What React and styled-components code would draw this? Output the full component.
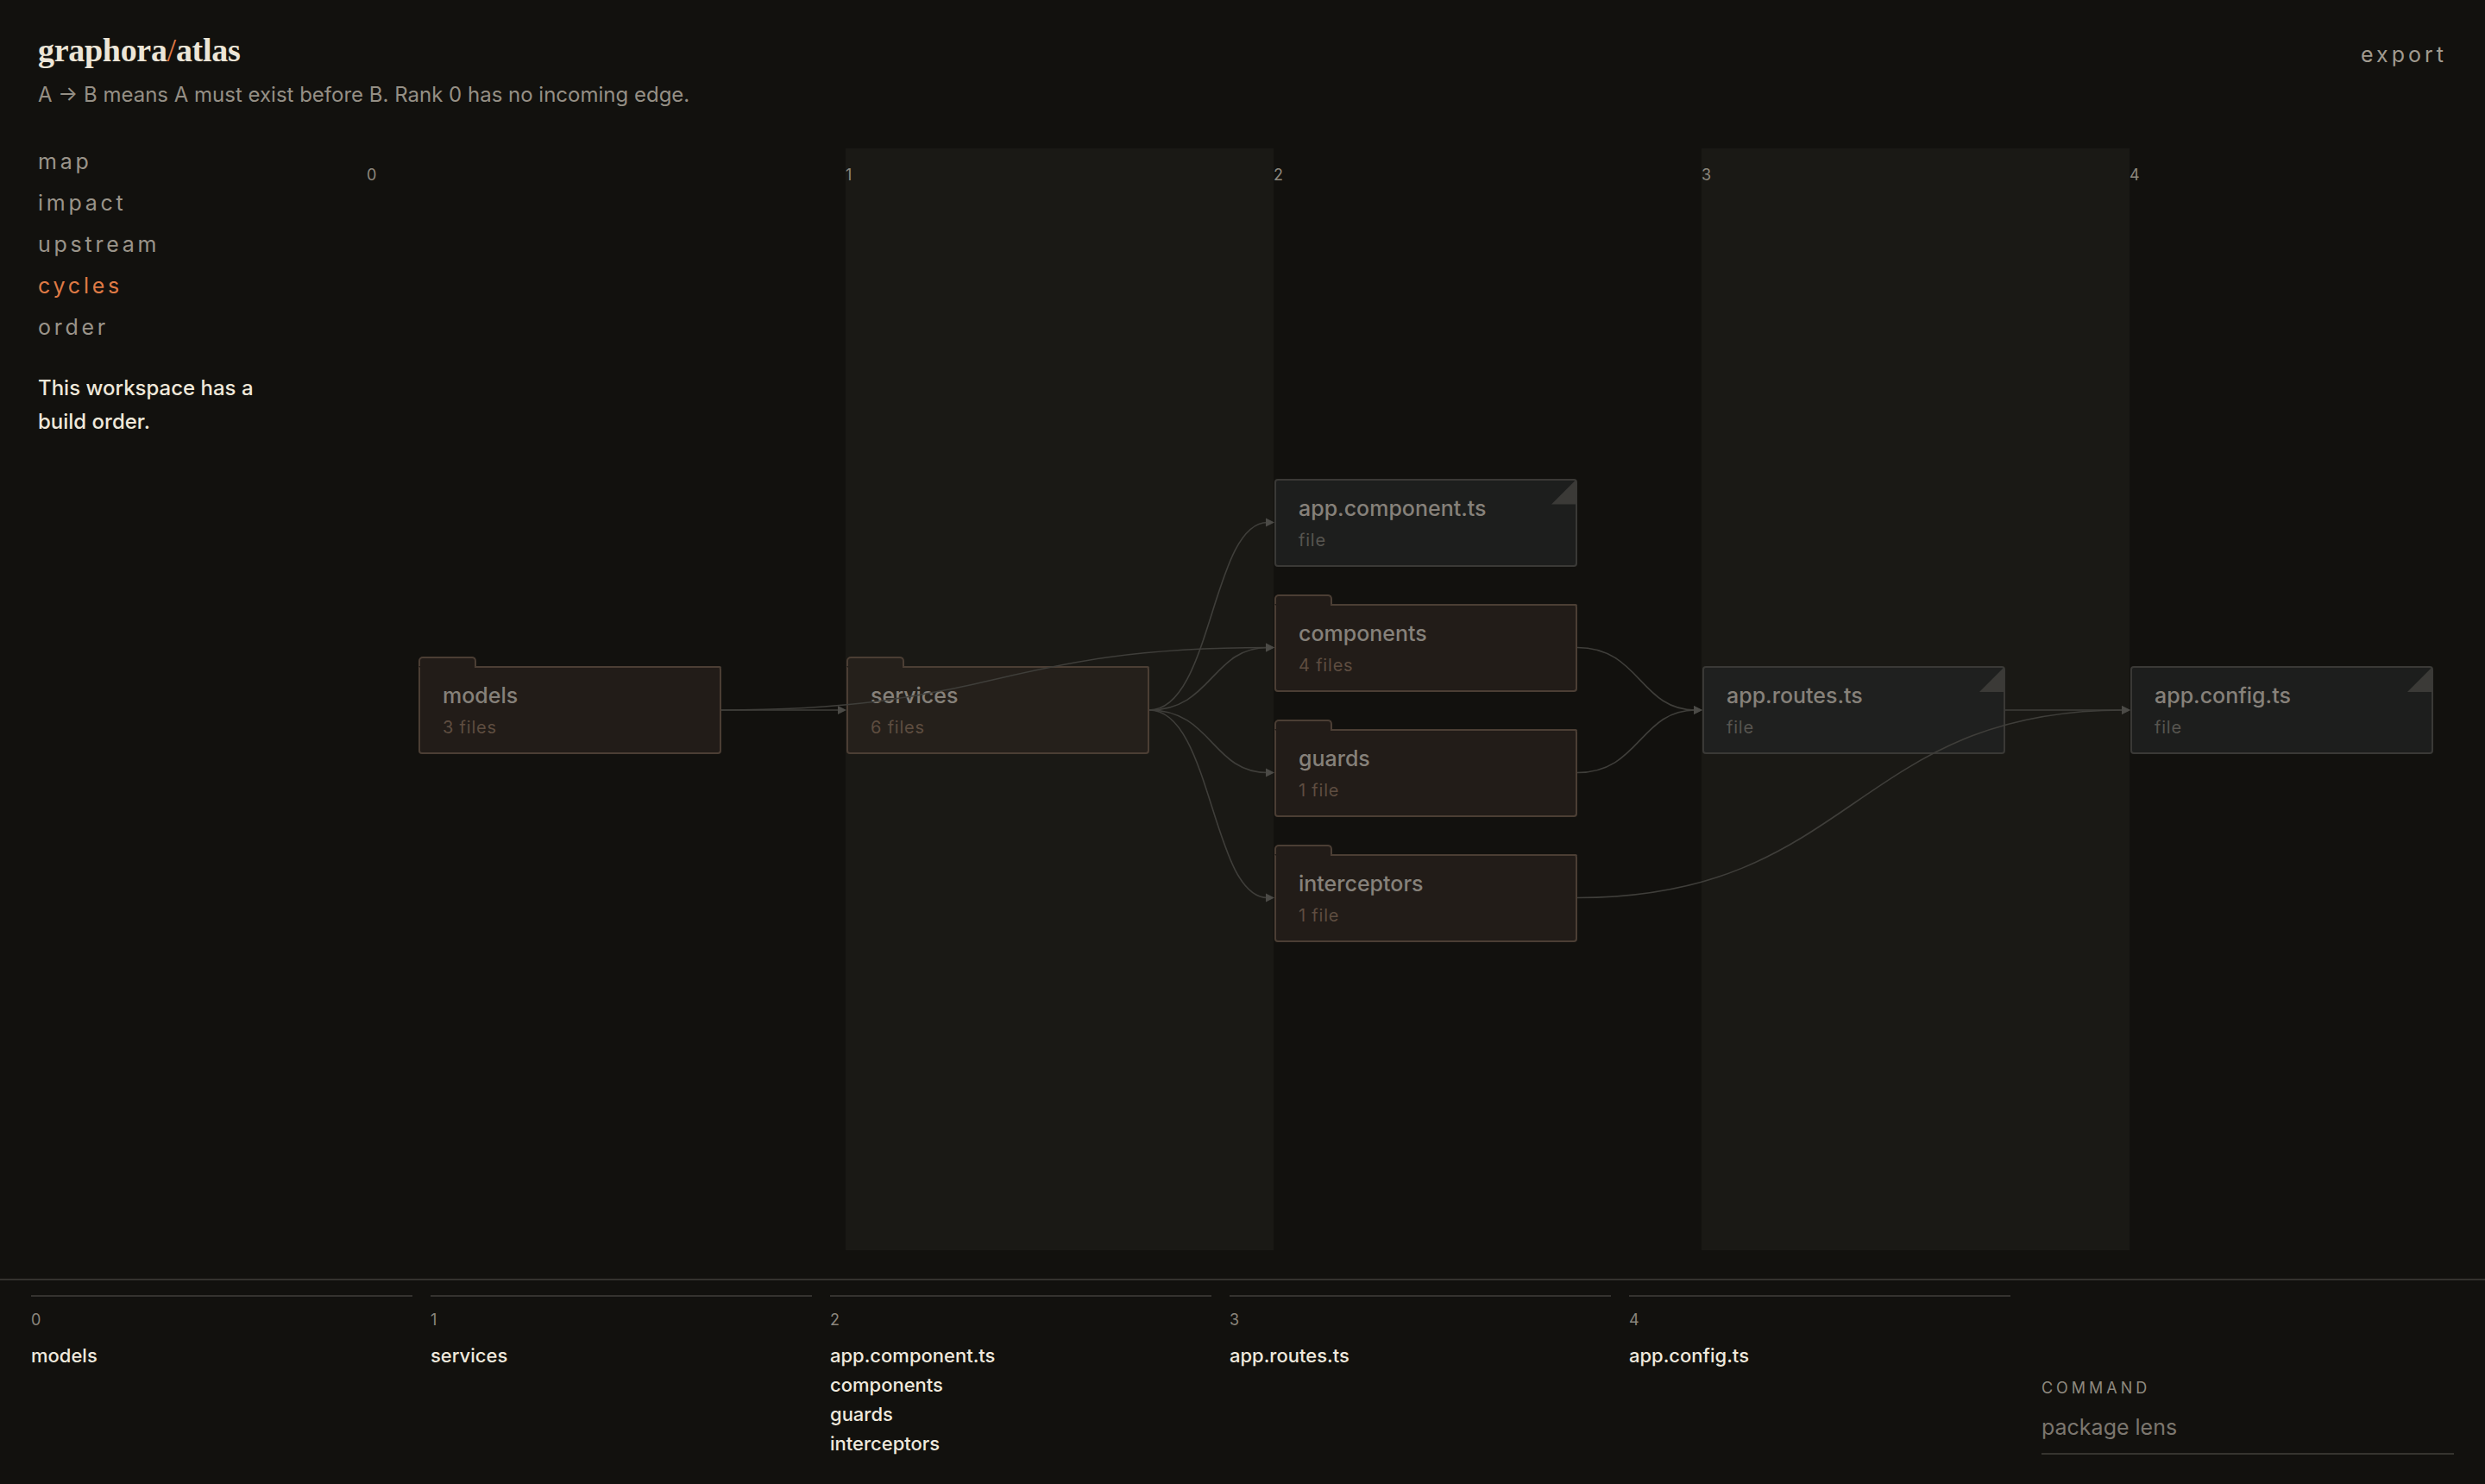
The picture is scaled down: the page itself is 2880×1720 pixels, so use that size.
import React from "react";
import styled, { createGlobalStyle } from "styled-components";

const GlobalStyle = createGlobalStyle`
  html, body {
    margin: 0;
    padding: 0;
    background: #12110e;
    overflow: hidden;
  }
  body {
    font-family: Inter, "Noto Sans", sans-serif;
    color: #efe8da;
  }
`;

const COL_W = 496;
const NODE_W = 351;
const NODE_H = 102;
const ROW_STEP = 145;
const MID_Y = 651;

const ranks = [
  [{ id: "models", name: "models", meta: "3 files", kind: "folder" }],
  [{ id: "services", name: "services", meta: "6 files", kind: "folder" }],
  [
    { id: "appComponent", name: "app.component.ts", meta: "file", kind: "file" },
    { id: "components", name: "components", meta: "4 files", kind: "folder" },
    { id: "guards", name: "guards", meta: "1 file", kind: "folder" },
    { id: "interceptors", name: "interceptors", meta: "1 file", kind: "folder" },
  ],
  [{ id: "routes", name: "app.routes.ts", meta: "file", kind: "file" }],
  [{ id: "config", name: "app.config.ts", meta: "file", kind: "file" }],
];

const edges = [
  ["models", "services"],
  ["models", "components"],
  ["services", "appComponent"],
  ["services", "components"],
  ["services", "guards"],
  ["services", "interceptors"],
  ["components", "routes"],
  ["guards", "routes"],
  ["routes", "config"],
  ["interceptors", "config"],
];

const navItems = ["map", "impact", "upstream", "cycles", "order"];

// node positions inside the canvas
const layout = {};
ranks.forEach((col, r) => {
  col.forEach((n, i) => {
    const cy = MID_Y + (i - (col.length - 1) / 2) * ROW_STEP;
    layout[n.id] = { ...n, rank: r, x: 60 + r * COL_W, y: cy - NODE_H / 2 };
  });
});

const Page = styled.div`
  height: 100vh;
  display: flex;
  flex-direction: column;
  box-sizing: border-box;
`;

const Header = styled.header`
  display: flex;
  justify-content: space-between;
  align-items: flex-start;
  padding: 36px 44px 0 44px;
`;

const Brand = styled.div`
  display: flex;
  flex-direction: column;
  gap: 14px;
`;

const Logo = styled.h1`
  margin: 0;
  font-family: "Liberation Serif", "DejaVu Serif", serif;
  font-weight: 700;
  font-size: 38px;
  line-height: 44px;
  letter-spacing: -0.3px;
  color: #ece5d7;

  span {
    color: #e07a45;
    font-weight: 400;
  }
`;

const Subtitle = styled.p`
  margin: 0;
  font-size: 24px;
  line-height: 31px;
  color: #958f85;
`;

const ExportButton = styled.button`
  margin-top: 12px;
  background: none;
  border: none;
  padding: 0;
  font-family: Inter, sans-serif;
  font-size: 25px;
  line-height: 30px;
  letter-spacing: 0.16em;
  color: #a19b90;
  cursor: pointer;
`;

const Main = styled.main`
  display: flex;
  padding: 35px 44px 0 44px;
  flex: 0 0 auto;
`;

const Sidebar = styled.aside`
  width: 381px;
  flex: 0 0 381px;
  display: flex;
  flex-direction: column;
  padding-top: 3px;
`;

const Nav = styled.nav`
  display: flex;
  flex-direction: column;
`;

const NavItem = styled.a`
  font-size: 25px;
  line-height: 48px;
  letter-spacing: 0.15em;
  color: ${(p) => (p.$active ? "#df7a45" : "#9a948a")};
  cursor: pointer;
`;

const Note = styled.p`
  margin: 27px 0 0;
  width: 270px;
  font-size: 24px;
  font-weight: 500;
  line-height: 39px;
  color: #efe8da;
`;

const Canvas = styled.section`
  position: relative;
  flex: 1;
  margin-top: 12px;
  height: 1277px;
`;

const Columns = styled.div`
  display: grid;
  grid-template-columns: 555px ${COL_W}px ${COL_W}px ${COL_W}px 1fr;
  height: 100%;
`;

const Column = styled.div`
  background: ${(p) => (p.$band ? "#1a1915" : "transparent")};
  padding-top: 20px;
`;

const ColLabel = styled.div`
  font-size: 18px;
  line-height: 22px;
  color: #8d887e;
`;

const NodeBox = styled.div`
  position: absolute;
  width: ${NODE_W}px;
  height: ${NODE_H}px;
  box-sizing: border-box;
  padding: 17px 26px 0;
  border: 2px solid ${(p) => (p.$kind === "folder" ? "#4b3e34" : "#3a3936")};
  border-radius: 4px;
  background: ${(p) =>
    p.$kind === "folder" ? "rgba(48, 39, 33, 0.55)" : "rgba(34, 35, 35, 0.7)"};

  ${(p) =>
    p.$kind === "folder"
      ? `
    border-top-color: transparent;
    border-top-left-radius: 0;
    &::before {
      content: "";
      position: absolute;
      box-sizing: border-box;
      top: -13px;
      left: -2px;
      width: 67px;
      height: 11px;
      border: 2px solid #4b3e34;
      border-bottom: none;
      border-radius: 5px 5px 0 0;
      background: rgba(48, 39, 33, 0.55);
    }
    &::after {
      content: "";
      position: absolute;
      top: -2px;
      left: 63px;
      right: -2px;
      height: 2px;
      border-top-right-radius: 4px;
      background: #4b3e34;
    }
  `
      : `
    &::after {
      content: "";
      position: absolute;
      top: 0;
      right: 0;
      width: 28px;
      height: 28px;
      background: #3b3a37;
      clip-path: polygon(100% 0, 100% 100%, 0 100%);
    }
  `}
`;

const NodeName = styled.div`
  font-size: 25px;
  line-height: 30px;
  font-weight: 500;
  color: #86817a;
`;

const NodeMeta = styled.div`
  margin-top: 9px;
  font-size: 20px;
  line-height: 26px;
  letter-spacing: 0.04em;
  color: ${(p) => (p.$kind === "folder" ? "#5e4d40" : "#575550")};
`;

const EdgeLayer = styled.svg`
  position: absolute;
  inset: 0;
  width: 100%;
  height: 100%;
  pointer-events: none;
  overflow: visible;
`;

const Footer = styled.footer`
  flex: 1;
  border-top: 2px solid #34322e;
  margin-top: 33px;
  padding: 17px 36px 0;
  display: grid;
  grid-template-columns: repeat(5, 442px) 1fr;
  column-gap: 21px;
  align-items: start;
`;

const RankCol = styled.div`
  border-top: 2px solid #35332f;
  padding-top: 16px;
`;

const RankNum = styled.div`
  font-size: 18px;
  line-height: 22px;
  color: #8b867d;
  margin-bottom: 13px;
`;

const RankItem = styled.div`
  font-size: 22px;
  line-height: 34px;
  font-weight: 500;
  color: #efe9dd;
`;

const Command = styled.label`
  margin-left: 15px;
  padding-top: 97px;
  display: flex;
  flex-direction: column;
`;

const CommandLabel = styled.span`
  font-size: 18px;
  line-height: 22px;
  letter-spacing: 0.22em;
  color: #8e897f;
`;

const CommandInput = styled.input`
  margin-top: 17px;
  padding: 0 0 13px;
  background: none;
  border: none;
  border-bottom: 2px solid #36342f;
  outline: none;
  font-family: Inter, sans-serif;
  font-size: 25px;
  line-height: 34px;
  color: #efe9dd;

  &::placeholder {
    color: #7b766e;
  }
`;

function edgePath(a, b) {
  const x1 = a.x + NODE_W;
  const y1 = a.y + NODE_H / 2;
  const x2 = b.x;
  const y2 = b.y + NODE_H / 2;
  const mx = (x1 + x2) / 2;
  return `M${x1},${y1} C${mx},${y1} ${mx},${y2} ${x2 - 8},${y2}`;
}

function Arrow({ to }) {
  const x = to.x;
  const y = to.y + NODE_H / 2;
  return <polygon points={`${x},${y} ${x - 10},${y - 5} ${x - 10},${y + 5}`} fill="#4b4a46" />;
}

export default function App() {
  const nodes = Object.values(layout);
  return (
    <Page>
      <GlobalStyle />
      <Header>
        <Brand>
          <Logo>
            graphora<span>/</span>atlas
          </Logo>
          <Subtitle>A → B means A must exist before B. Rank 0 has no incoming edge.</Subtitle>
        </Brand>
        <ExportButton>export</ExportButton>
      </Header>

      <Main>
        <Sidebar>
          <Nav>
            {navItems.map((item) => (
              <NavItem key={item} $active={item === "cycles"}>
                {item}
              </NavItem>
            ))}
          </Nav>
          <Note>This workspace has a build order.</Note>
        </Sidebar>

        <Canvas>
          <Columns>
            {ranks.map((_, r) => (
              <Column key={r} $band={r % 2 === 1}>
                <ColLabel>{r}</ColLabel>
              </Column>
            ))}
          </Columns>

          {nodes.map((n) => (
            <NodeBox key={n.id} $kind={n.kind} style={{ left: n.x, top: n.y }}>
              <NodeName>{n.name}</NodeName>
              <NodeMeta $kind={n.kind}>{n.meta}</NodeMeta>
            </NodeBox>
          ))}

          <EdgeLayer>
            {edges.map(([from, to]) => (
              <g key={from + to}>
                <path
                  d={edgePath(layout[from], layout[to])}
                  fill="none"
                  stroke="#3f3e3a"
                  strokeWidth="1.6"
                />
                <Arrow to={layout[to]} />
              </g>
            ))}
          </EdgeLayer>
        </Canvas>
      </Main>

      <Footer>
        {ranks.map((col, r) => (
          <RankCol key={r}>
            <RankNum>{r}</RankNum>
            {col.map((n) => (
              <RankItem key={n.id}>{n.name}</RankItem>
            ))}
          </RankCol>
        ))}
        <Command>
          <CommandLabel>COMMAND</CommandLabel>
          <CommandInput placeholder="package lens" />
        </Command>
      </Footer>
    </Page>
  );
}
